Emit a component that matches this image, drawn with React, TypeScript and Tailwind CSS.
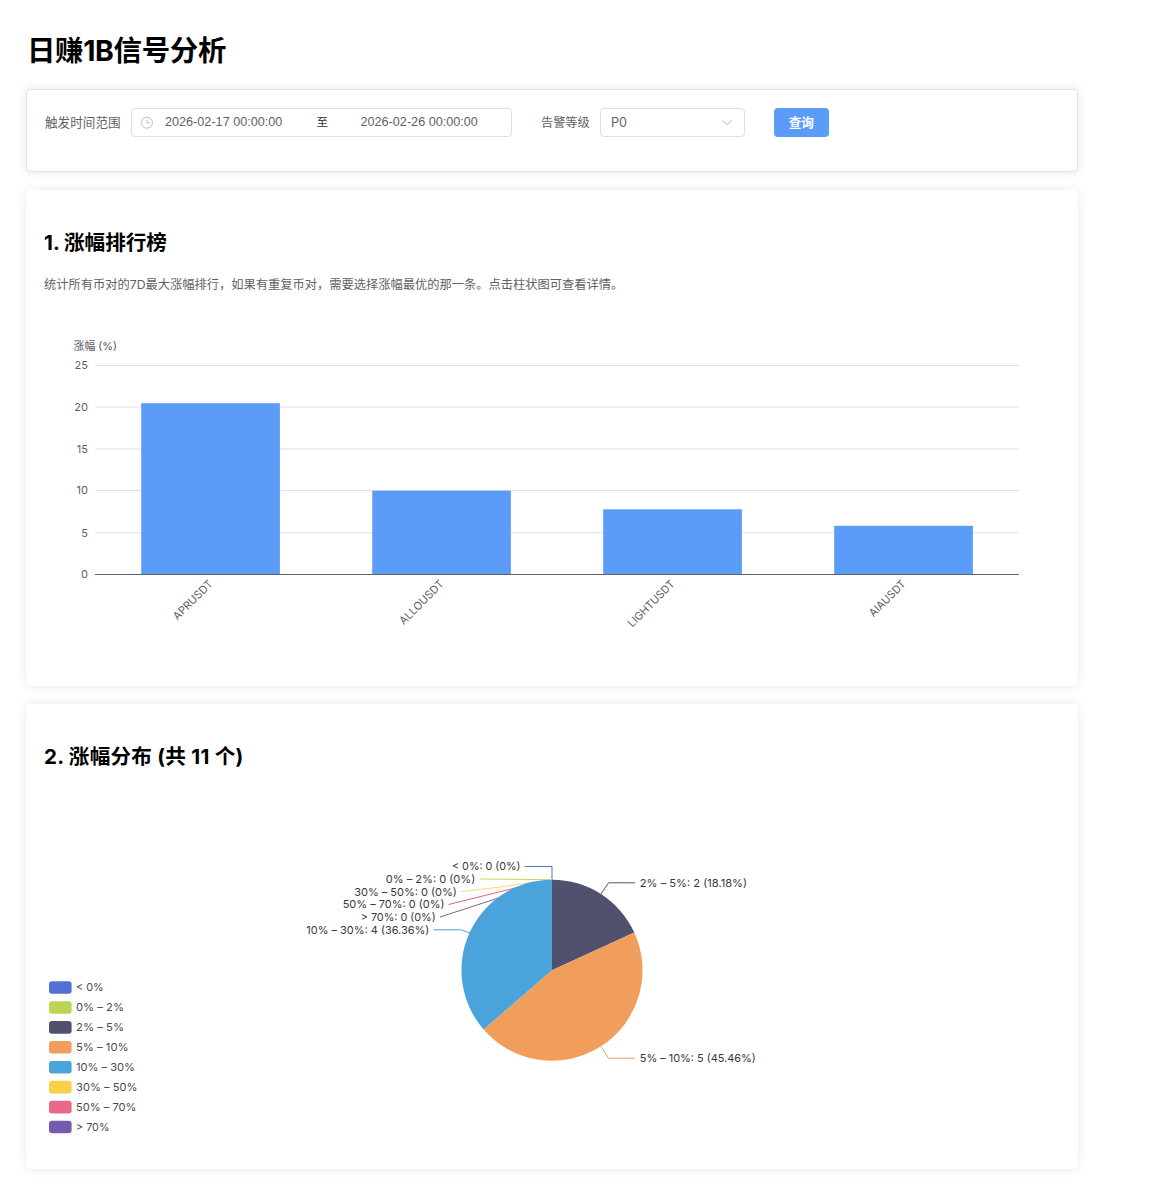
import type { ReactNode } from "react";

const GRID = [
  { value: 25, y: 365.5 },
  { value: 20, y: 407 },
  { value: 15, y: 449 },
  { value: 10, y: 490.5 },
  { value: 5, y: 532.8 },
  { value: 0, y: 574.5 },
];

const BARS = [
  { name: "APRUSDT", x: 141.2, top: 403.2, length: 51 },
  { name: "ALLOUSDT", x: 372.2, top: 490.7, length: 57.5 },
  { name: "LIGHTUSDT", x: 603.2, top: 509.3, length: 61 },
  { name: "AIAUSDT", x: 834.2, top: 525.8, length: 46.5 },
];

const LEGEND = [
  { label: "< 0%", color: "#5470d6", width: 27.5 },
  { label: "0% – 2%", color: "#b9d551", width: 48 },
  { label: "2% – 5%", color: "#51516f", width: 48 },
  { label: "5% – 10%", color: "#f19e5d", width: 52.5 },
  { label: "10% – 30%", color: "#4aa3da", width: 59 },
  { label: "30% – 50%", color: "#f9d147", width: 61.5 },
  { label: "50% – 70%", color: "#e76a8b", width: 60.5 },
  { label: "> 70%", color: "#755bab", width: 33.5 },
];

const CALLOUTS = [
  { text: "< 0%: 0 (0%)", x: 452, y: 866.5, width: 68.5, color: "#5470c6", points: "524.5,866.5 552,866.5 552,880" },
  { text: "0% – 2%: 0 (0%)", x: 385.7, y: 879.3, width: 89.5, color: "#c3d95f", points: "479.5,879 552,879.7" },
  { text: "30% – 50%: 0 (0%)", x: 354.2, y: 892, width: 102.5, color: "#f9d976", points: "461,891.7 500,887 552,879.7" },
  { text: "50% – 70%: 0 (0%)", x: 342.7, y: 904.7, width: 101.8, color: "#df6580", points: "448.5,904.5 515,888" },
  { text: "> 70%: 0 (0%)", x: 360.7, y: 917.3, width: 75, color: "#7b629f", points: "440,917 500,897.5" },
  { text: "10% – 30%: 4 (36.36%)", x: 306.3, y: 930, width: 123, color: "#4aa3da", points: "433.5,929.8 461,929.8 470,933" },
  { text: "2% – 5%: 2 (18.18%)", x: 639.8, y: 882.8, width: 107.3, color: "#51516f", points: "601,894 608.5,882.8 635,882.8" },
  { text: "5% – 10%: 5 (45.46%)", x: 639.8, y: 1058.2, width: 116, color: "#f19e5d", points: "601,1046.5 608.5,1058.2 635,1058.2" },
];

function BarChart() {
  return (
    <svg viewBox="45 330 1014 310" className="block h-[310px] w-[1014px] text-[11px]">
      <text x="73.5" y="350" fill="#555860" textLength="43.5" lengthAdjust="spacingAndGlyphs">涨幅 (%)</text>
      {GRID.map((line) => (
        <g key={line.value}>
          {line.value > 0 && <line x1="95" x2="1019" y1={line.y} y2={line.y} stroke="#dfe1e4" />}
          <text x="88" y={line.y + 3.8} textAnchor="end" fill="#5c5f66">{line.value}</text>
        </g>
      ))}
      {BARS.map((bar) => (
        <g key={bar.name}>
          <rect x={bar.x} y={bar.top} width="138.7" height={574.5 - bar.top} fill="#5c9cf9" />
          <text
            textAnchor="end"
            textLength={bar.length}
            lengthAdjust="spacingAndGlyphs"
            fill="#5c5f66"
            transform={`translate(${bar.x + 72.3} 584.6) rotate(-45)`}
          >
            {bar.name}
          </text>
        </g>
      ))}
      <line x1="95" x2="1019" y1="574.5" y2="574.5" stroke="#62656e" />
    </svg>
  );
}

function PieChart() {
  return (
    <svg viewBox="45 790 1014 360" className="block h-[360px] w-[1014px] text-[11px]">
      {CALLOUTS.map((item) => (
        <g key={item.text}>
          <polyline points={item.points} fill="none" stroke={item.color} />
          <text x={item.x} y={item.y + 3.7} fill="#36383d" textLength={item.width} lengthAdjust="spacingAndGlyphs">
            {item.text}
          </text>
        </g>
      ))}
      <path d="M552 970.2V879.7A90.5 90.5 0 0 1 634.3 932.6Z" fill="#51516f" />
      <path d="M552 970.2L634.3 932.6A90.5 90.5 0 0 1 483.6 1029.5Z" fill="#f19e5d" />
      <path d="M552 970.2L483.6 1029.5A90.5 90.5 0 0 1 552 879.7Z" fill="#4aa3da" />
      {LEGEND.map((item, i) => (
        <g key={item.label}>
          <rect x="49" y={981.2 + i * 19.93} width="22.6" height="12.6" rx="3" fill={item.color} />
          <text x="76" y={991.4 + i * 19.93} fill="#484a50" textLength={item.width} lengthAdjust="spacingAndGlyphs">
            {item.label}
          </text>
        </g>
      ))}
    </svg>
  );
}

function Section({ className, children }: { className: string; children: ReactNode }) {
  return (
    <section className={`rounded-[4px] bg-white px-[19px] shadow-[0_0_11px_rgba(0,0,0,0.09)] ${className}`}>
      {children}
    </section>
  );
}

export default function App() {
  return (
    <main className="h-[1200px] w-[1160px] overflow-hidden bg-white pl-[26px] pt-[29px] font-[Inter,'Noto_Sans_CJK_SC',sans-serif]">
      <h1 className="h-[60px] whitespace-nowrap pl-px text-[28.4px] font-bold leading-[43px] tracking-[-0.3px] text-black">
        日赚1B信号分析
      </h1>
      <div className="w-[1051.5px]">
        <form className="flex h-[83px] items-start rounded-[4px] border border-[#e2e4e9] bg-white pl-[18px] pt-[18px] text-[12.6px] leading-[29px] text-[#606266] shadow-[0_0_11px_rgba(0,0,0,0.1)]">
          <label className="w-[86px] whitespace-nowrap">触发时间范围</label>
          <div className="flex h-[29px] w-[381px] items-center rounded-[4px] border border-[#dcdfe6] font-['Liberation_Sans','Noto_Sans_CJK_SC',sans-serif] leading-[27px]">
            <svg viewBox="0 0 14 14" className="ml-[8px] h-[14px] w-[14px]" fill="none" stroke="#b6b9c0" strokeWidth="0.9">
              <circle cx="7" cy="6.7" r="5.5" />
              <path d="M7 3.4V7H10" />
            </svg>
            <span className="ml-[11px] w-[151.5px] whitespace-nowrap text-[12.65px]">2026-02-17 00:00:00</span>
            <span className="w-[44px] text-[11.5px] text-[#303133]">至</span>
            <span className="whitespace-nowrap text-[12.65px]">2026-02-26 00:00:00</span>
          </div>
          <label className="ml-[29px] w-[59px] whitespace-nowrap text-[12.2px]">告警等级</label>
          <div className="flex h-[29px] w-[145px] items-center justify-between rounded-[4px] border border-[#dcdfe6] pl-[10px] pr-[11px] leading-[27px]">
            <span>P0</span>
            <svg viewBox="0 0 12 12" className="h-3 w-3" fill="none" stroke="#b0b3ba">
              <path d="M1.5 3.3L6 7.8L10.5 3.3" />
            </svg>
          </div>
          <button type="button" className="ml-[29px] h-[29px] w-[54.5px] rounded-[4px] bg-[#5c9cf9] text-[12.6px] font-bold leading-[28px] text-white">
            查询
          </button>
        </form>
        <Section className="mt-[18px] h-[496px] pt-[37px]">
          <h2 className="-ml-px h-[45px] whitespace-nowrap text-[20.6px] font-bold leading-[32px] text-black">1. 涨幅排行榜</h2>
          <p className="-ml-px h-[58px] whitespace-nowrap text-[12.25px] leading-[25px] text-[#606266]">
            统计所有币对的7D最大涨幅排行，如果有重复币对，需要选择涨幅最优的那一条。点击柱状图可查看详情。
          </p>
          <BarChart />
        </Section>
        <Section className="mt-[18px] h-[465px] pt-[37px]">
          <h2 className="-ml-px h-[49px] whitespace-nowrap text-[20.6px] font-bold leading-[32px] tracking-[0.25px] text-black">2. 涨幅分布 (共 11 个)</h2>
          <PieChart />
        </Section>
      </div>
    </main>
  );
}
